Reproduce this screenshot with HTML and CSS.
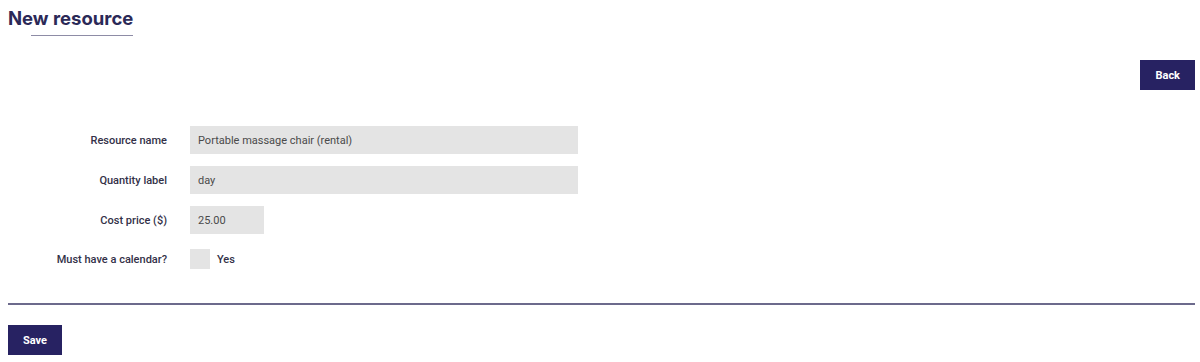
FILE: index.html
```html
<!DOCTYPE html>
<html lang="en">
<head>
  <meta charset="UTF-8">
  <meta name="viewport" content="width=device-width, initial-scale=1.0">
  <title>New resource</title>
  <link rel="stylesheet" href="styles.css">
</head>
<body>
  <div class="page-head">
    <h1 class="page-title">New resource</h1>
    <div class="title-rule"></div>
  </div>

  <div class="toolbar">
    <button class="btn">Back</button>
  </div>

  <form class="resource-form">
    <div class="form-row">
      <label class="form-label">Resource name</label>
      <input class="field field-wide" type="text" value="Portable massage chair (rental)">
    </div>
    <div class="form-row">
      <label class="form-label">Quantity label</label>
      <input class="field field-wide" type="text" value="day">
    </div>
    <div class="form-row">
      <label class="form-label">Cost price ($)</label>
      <input class="field field-short" type="text" value="25.00">
    </div>
    <div class="form-row row-check">
      <label class="form-label">Must have a calendar?</label>
      <span class="check-box"></span>
      <span class="check-text">Yes</span>
    </div>
  </form>

  <hr class="divider">

  <button class="btn">Save</button>
</body>
</html>
```

FILE: styles.css
```css
body {
  margin: 8px 5px 8px 8px;
  font-family: Roboto, "Liberation Sans", sans-serif;
  color: #2c2a4a;
  background-color: #fff;
}

.page-title {
  font-family: Inter, Roboto, sans-serif;
  font-size: 18.5px;
  font-weight: 700;
  color: #2b2957;
  margin: 0;
  line-height: 20px;
}

.title-rule {
  width: 102px;
  height: 1px;
  margin: 7px 0 0 23px;
  background-color: #8e8ca6;
}

.toolbar {
  display: flex;
  justify-content: flex-end;
  margin-top: 24px;
}

.btn {
  font-family: Roboto, sans-serif;
  font-size: 11px;
  font-weight: 700;
  color: #fff;
  background-color: #272262;
  border: none;
  padding: 0 15px;
  height: 30px;
  cursor: pointer;
}

.resource-form {
  display: flex;
  flex-direction: column;
  gap: 12px;
  margin-top: 36px;
}

.form-row {
  display: flex;
  align-items: center;
}

.form-label {
  width: 159px;
  text-align: right;
  font-size: 11px;
  font-weight: 500;
  color: #333148;
  margin-right: 23px;
}

.field {
  font-family: Roboto, sans-serif;
  font-size: 11px;
  color: #4a4a4a;
  background-color: #e4e4e4;
  border: none;
  height: 28px;
  padding: 0 8px;
  box-sizing: border-box;
}

.field-wide {
  width: 388px;
}

.field-short {
  width: 74px;
}

.row-check {
  margin-top: 3px;
}

.check-box {
  width: 20px;
  height: 20px;
  background-color: #e4e4e4;
}

.check-text {
  font-size: 11px;
  font-weight: 500;
  margin-left: 7px;
  color: #333148;
}

.divider {
  border: none;
  height: 2px;
  background-color: #6c6a8c;
  margin: 34px 0 20px 0;
}
```
